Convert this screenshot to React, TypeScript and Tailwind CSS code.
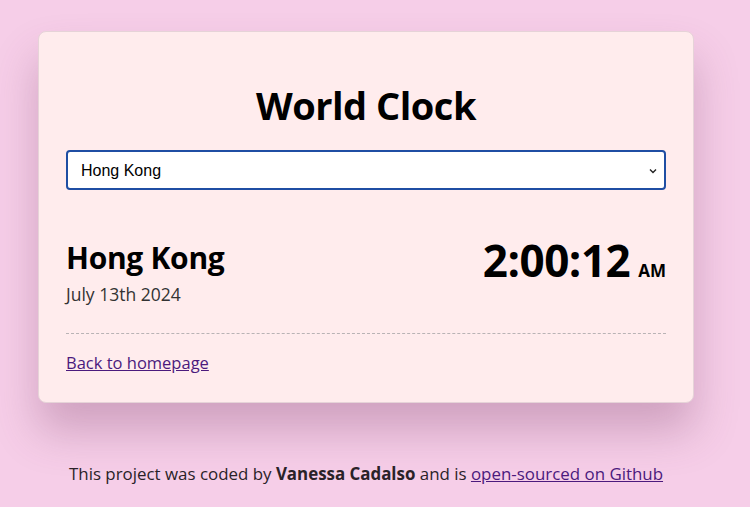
export default function App() {
  return (
    <div className="min-h-screen bg-[#f6cee8] pt-[31px] font-['Open_Sans',sans-serif] text-black">
      <div className="w-[732px]">
        <div className="mx-[38px] rounded-lg border border-[#e6d3d8] bg-[#ffeced] px-[27px] pb-[27px] pt-[50px] shadow-[0_28px_44px_rgba(120,60,100,0.3)]">
          <h1 className="text-center text-[38px] font-bold leading-[46px] tracking-[-0.5px]">World Clock</h1>
          <div className="mt-[22px] flex h-[40px] items-center justify-between rounded-[4px] border-2 border-[#1f4ea3] bg-white pl-[13px] pr-[6px] pt-[1px] font-['Liberation_Sans',sans-serif] text-[16px]">
            <span>Hong Kong</span>
            <svg width="10" height="10" viewBox="0 0 10 10" fill="none" stroke="#222" strokeWidth="1.4">
              <path d="M2 3.5 L5 6.5 L8 3.5" />
            </svg>
          </div>
          <div className="mt-[48px] flex items-start justify-between">
            <div>
              <div className="text-[30px] font-bold leading-[40px] tracking-[-0.3px]">Hong Kong</div>
              <div className="mt-[4px] text-[17.5px] leading-[24px] text-[#333]">July 13th 2024</div>
            </div>
            <div className="-mt-[1px] flex items-baseline gap-[8px]">
              <span className="text-[44px] font-bold leading-[46px] tracking-[-0.5px]">2:00:12</span>
              <span className="text-[17px] font-bold">AM</span>
            </div>
          </div>
          <div className="mt-[27px] border-t border-dashed border-[#b9b3b5]" />
          <a href="#" className="mt-[17px] inline-block text-[16.5px] leading-[24px] text-[#4b1a7d] underline">Back to homepage</a>
        </div>
        <p className="mt-[58px] text-center text-[16.9px] text-[#2a2228]">
          This project was coded by <strong>Vanessa Cadalso</strong> and is{" "}
          <a href="#" className="text-[#4b1a7d] underline">open-sourced on Github</a>
        </p>
      </div>
    </div>
  );
}
